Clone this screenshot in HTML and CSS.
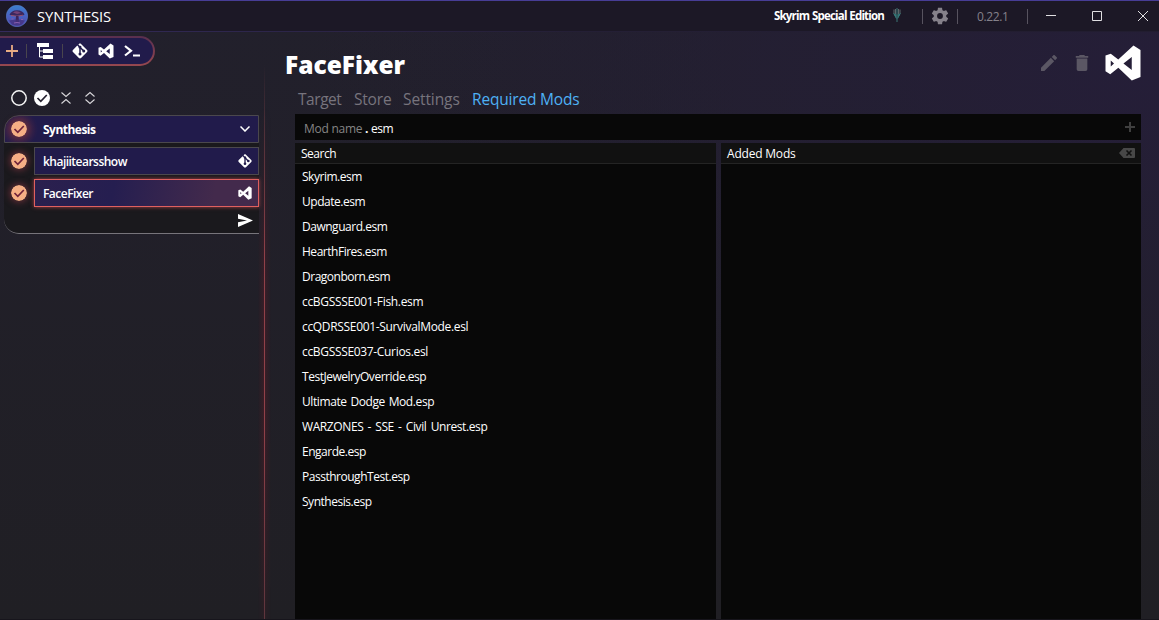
FILE: index.html
```html
<!DOCTYPE html>
<html lang="en">
<head>
<meta charset="utf-8">
<title>Synthesis</title>
<link rel="stylesheet" href="styles.css">
</head>
<body>
<svg class="defs" width="0" height="0">
  <symbol id="git" viewBox="0 0 24 24"><path d="M2.6,10.59L8.38,4.8L10.07,6.5C9.83,7.35 10.22,8.28 11,8.73V14.27C10.4,14.61 10,15.26 10,16A2,2 0 0,0 12,18A2,2 0 0,0 14,16C14,15.26 13.6,14.61 13,14.27V9.41L15.07,11.5C15,11.65 15,11.82 15,12A2,2 0 0,0 17,14A2,2 0 0,0 19,12A2,2 0 0,0 17,10C16.82,10 16.65,10 16.5,10.07L13.93,7.5C14.19,6.57 13.71,5.55 12.78,5.16C12.35,5 11.9,4.96 11.5,5.07L9.8,3.38L10.59,2.6C11.37,1.81 12.63,1.81 13.41,2.6L21.4,10.59C22.19,11.37 22.19,12.63 21.4,13.41L13.41,21.4C12.63,22.19 11.37,22.19 10.59,21.4L2.6,13.41C1.81,12.63 1.81,11.37 2.6,10.59Z"/></symbol>
  <symbol id="vs" viewBox="0 0 24 24"><path d="M17,8.5L12.25,12.32L17,16V8.5M4.7,18.4L2,16.7V7.7L5,6.7L9.3,10.03L18,2L22,4.5V20L17,22L9.34,14.66L4.7,18.4M5,14L6.86,12.28L5,10.5V14Z"/></symbol>
  <symbol id="check" viewBox="0 0 16 16"><circle cx="8" cy="8" r="8"/><path class="tick" d="M3.500 8l3.300 3.300 6-6.300"/></symbol>
</svg>
<div class="window">
  <header class="titlebar">
    <svg class="logo" viewBox="0 0 22 22">
      <defs><linearGradient id="sky" x1="0" y1="0" x2="0" y2="1"><stop offset="0" stop-color="#3a80cc"/><stop offset=".5" stop-color="#4a62c4"/><stop offset="1" stop-color="#5146a8"/></linearGradient></defs>
      <circle cx="11" cy="11" r="10.700" fill="url(#sky)" stroke="#5a7cc8" stroke-width=".6"/>
      <path d="M3.500 9.500C5 7 7 5.200 11 5.200c4 0 6.500 1.800 7.500 4.300-1.500 1-4 1.600-7.500 1.600s-6-.6-7.500-1.600z" fill="#3b275f"/>
      <path d="M7 7.500q4-2.500 8 .5l-4 1z" fill="#754277"/>
      <path d="M5 10.500q6 1.500 12-.3" stroke="#955272" fill="none"/>
      <path d="M10 11h2.500l.5 6H9.500z" fill="#3b255b"/>
      <path d="M3 15.500q8-2 16 0l-3 4q-5 2-10 0z" fill="#44307c" opacity=".75"/>
      <path d="M5.500 14h2M15 14.500h2M8 18q3-1 6 0" stroke="#8a5fae" fill="none"/>
    </svg>
    <span class="app-name">SYNTHESIS</span>
    <span class="game">Skyrim Special Edition</span>
    <svg class="game-icon" viewBox="0 0 10 14"><path d="M5 0v14" stroke="#31565b" stroke-width="1.500"/><path d="M2 1.500v4l2 4M8 1.500v4l-2 4M3.500 1v5M6.500 1v5" stroke="#5c686b" fill="none"/><path d="M1 5l3.500 1.500v5zM9 5L5.500 6.500v5z" fill="#347777"/></svg>
    <i class="sep"></i>
    <svg class="cog" viewBox="0 0 24 24"><path d="M12,15.5A3.5,3.5 0 0,1 8.5,12A3.5,3.5 0 0,1 12,8.5A3.5,3.5 0 0,1 15.5,12A3.5,3.5 0 0,1 12,15.5M19.43,12.97C19.47,12.65 19.5,12.33 19.5,12C19.5,11.67 19.47,11.34 19.43,11L21.54,9.37C21.73,9.22 21.78,8.95 21.66,8.73L19.66,5.27C19.54,5.05 19.27,4.96 19.05,5.05L16.56,6.05C16.04,5.66 15.5,5.32 14.87,5.07L14.5,2.42C14.46,2.18 14.25,2 14,2H10C9.75,2 9.54,2.18 9.5,2.42L9.13,5.07C8.5,5.32 7.96,5.66 7.44,6.05L4.95,5.05C4.73,4.96 4.46,5.05 4.34,5.27L2.34,8.73C2.21,8.95 2.27,9.22 2.46,9.37L4.57,11C4.53,11.34 4.5,11.67 4.5,12C4.5,12.33 4.53,12.65 4.57,12.97L2.46,14.63C2.27,14.78 2.21,15.05 2.34,15.27L4.34,18.73C4.46,18.95 4.73,19.03 4.95,18.95L7.44,17.94C7.96,18.34 8.5,18.68 9.13,18.93L9.5,21.58C9.54,21.82 9.75,22 10,22H14C14.25,22 14.46,21.82 14.5,21.58L14.87,18.93C15.5,18.67 16.04,18.34 16.56,17.94L19.05,18.95C19.27,19.03 19.54,18.95 19.66,18.73L21.66,15.27C21.78,15.05 21.73,14.78 21.54,14.63L19.43,12.97Z"/></svg>
    <i class="sep"></i>
    <span class="version">0.22.1</span>
    <i class="sep"></i>
    <svg class="win-buttons" viewBox="0 0 104 12"><path d="M0 5.500h10M46.500 1.500h9v9h-9zM92 1l10 10M102 1L92 11"/></svg>
  </header>
  <div class="body">
    <aside class="sidebar">
      <nav class="toolbar">
        <svg class="add" viewBox="0 0 12 12"><path d="M6 0v12M0 6h12"/></svg>
        <i class="bar"></i>
        <svg class="tree" viewBox="0 0 16 16"><path d="M0 0h12v4H0zM6 6h10v4H6zM6 12h10v4H6z"/><path class="link" d="M2.500 3v11H6M2.500 8H6"/></svg>
        <i class="bar"></i>
        <svg class="tool"><use href="#git"/></svg>
        <svg class="tool"><use href="#vs"/></svg>
        <svg class="term" viewBox="0 0 16 12"><path d="M1 1l6 4.800L1 10.500M9 10.500h7"/></svg>
      </nav>
      <div class="filters">
        <svg viewBox="0 0 16 16"><circle class="ring" cx="8" cy="8" r="7.200"/></svg>
        <svg class="all"><use href="#check"/></svg>
        <svg class="thin" viewBox="0 0 16 16"><path d="M3.500 2.500L8 6.500l4.500-4M3.500 13.500L8 9.500l4.500 4"/></svg>
        <svg class="thin" viewBox="0 0 16 16"><path d="M3.500 6.500L8 2.500l4.500 4M3.500 9.500L8 13.500l4.500-4"/></svg>
      </div>
      <section class="group">
        <div class="group-head">
          <svg class="on"><use href="#check"/></svg>
          <span class="label bold">Synthesis</span>
          <svg class="chev" viewBox="0 0 10 6"><path d="M.5.5L5 5 9.500.5"/></svg>
        </div>
        <div class="entry">
          <svg class="on"><use href="#check"/></svg>
          <div class="patcher"><span class="label">khajiitearsshow</span><svg class="kind"><use href="#git"/></svg></div>
        </div>
        <div class="entry">
          <svg class="on"><use href="#check"/></svg>
          <div class="patcher selected"><span class="label">FaceFixer</span><svg class="kind"><use href="#vs"/></svg></div>
        </div>
        <div class="run"><svg viewBox="0 0 15 13"><path d="M0 0l15 6.500L0 13V8.200l9-1.700-9-1.700z"/></svg></div>
      </section>
    </aside>
    <main class="content">
      <div class="heading">
        <h1>FaceFixer</h1>
        <svg class="pencil" viewBox="0 0 18 18"><path d="M0 14.250V18h3.750L14.810 6.940l-3.750-3.750L0 14.250M17.710 4.040c.390-.390.390-1.020 0-1.410l-2.340-2.340c-.390-.390-1.020-.390-1.410 0l-1.830 1.830 3.750 3.750 1.830-1.830z"/></svg>
        <svg class="trash" viewBox="0 0 14 18"><path d="M1 16a2 2 0 0 0 2 2h8a2 2 0 0 0 2-2V4H1v12M14 1h-3.500l-1-1h-5l-1 1H0v2h14V1z"/></svg>
        <svg class="big-vs"><use href="#vs"/></svg>
      </div>
      <nav class="tabs"><span class="t1">Target</span><span class="t2">Store</span><span class="t3">Settings</span><span class="t4">Required Mods</span></nav>
      <div class="mod-field"><span class="hint">Mod name</span><b>.</b><span class="ext">esm</span><svg class="plus" viewBox="0 0 10 10"><path d="M5 0v10M0 5h10"/></svg></div>
      <div class="panes">
        <section class="pane">
          <div class="pane-head search">Search</div>
          <ul class="mods">
            <li>Skyrim.esm</li><li>Update.esm</li><li>Dawnguard.esm</li><li>HearthFires.esm</li><li>Dragonborn.esm</li><li class="caps">ccBGSSSE001-Fish.esm</li><li class="caps">ccQDRSSE001-SurvivalMode.esl</li><li class="caps">ccBGSSSE037-Curios.esl</li><li>TestJewelryOverride.esp</li><li class="dodge">Ultimate Dodge Mod.esp</li><li class="spaced">WARZONES - SSE - Civil Unrest.esp</li><li>Engarde.esp</li><li>PassthroughTest.esp</li><li>Synthesis.esp</li>
          </ul>
        </section>
        <section class="pane">
          <div class="pane-head"><span>Added Mods</span><svg class="clear" viewBox="0 0 16 10"><path d="M4.500 0H15q1 0 1 1v8q0 1-1 1H4.500L0 5z"/><path class="cross" d="M7.500 2.500l5 5M12.500 2.500l-5 5"/></svg></div>
        </section>
      </div>
    </main>
  </div>
</div>
</body>
</html>
```

FILE: styles.css
```css
* { box-sizing: border-box; }
body { margin: 0; background: #1f1e24; color: #fff; font: 12px/16px "Open Sans", "Noto Sans", sans-serif; overflow: hidden; }
svg { display: block; flex: none; fill: currentColor; }
.defs { position: absolute; }
.window { width: 1159px; height: 620px; display: flex; flex-direction: column; background: radial-gradient(ellipse 850px 430px at 100% 12%, #251e38, transparent), linear-gradient(#22202c, #201f24); border-bottom: 1px solid #17151c; }
.titlebar { height: 32px; flex: none; display: flex; align-items: center; padding-left: 6px; background: linear-gradient(#473d96, #473d96) top / 100% 1px no-repeat, linear-gradient(90deg, #342b5c, #241f35 50%, #221d30) bottom / 100% 1px no-repeat, #1c1826; }
.logo { width: 22px; height: 22px; }
.app-name { font-size: 14.8px; line-height: 20px; margin: -1px 0 0 9px; width: 75px; letter-spacing: -0.12px; white-space: nowrap; }
.game { font-size: 11.5px; font-weight: 700; margin-left: 662px; width: 112px; letter-spacing: -0.8px; word-spacing: 0.5px; white-space: nowrap; }
.game-icon { width: 10px; height: 14px; margin: -2px 0 0 6px; }
.sep { width: 1px; height: 15px; background: #57535f; }
.game-icon + .sep { margin-left: 20px; }
.cog { width: 20px; height: 20px; margin: 0 7px; color: #85818a; }
.version { width: 32px; margin: 1px 18px 0 19px; color: #85818a; letter-spacing: -0.4px; }
.win-buttons { width: 104px; height: 12px; margin-left: 18px; fill: none; stroke: #e0dfe2; }
.body { flex: 1; display: flex; min-height: 0; }
.sidebar { width: 265px; flex: none; padding-top: 4px; position: relative; }
.sidebar::after { content: ""; position: absolute; right: 0; top: 32px; bottom: 0; width: 1px; background: linear-gradient(transparent, #4f3039 12%, #914149 35%, #914149 65%, #5e353d); }
.sidebar::before { content: ""; position: absolute; right: -6px; top: 32px; bottom: 0; width: 13px; background: linear-gradient(90deg, transparent, #5c1b2675, transparent); -webkit-mask-image: linear-gradient(transparent 8%, #000 40%, #000 65%, #0006); mask-image: linear-gradient(transparent 8%, #000 40%, #000 65%, #0006); }
.toolbar { width: 155px; height: 30px; display: flex; align-items: center; padding: 0 0 1px 6px; border: 2px solid transparent; border-left: 0; border-radius: 0 15px 15px 0; background: linear-gradient(#211b4b, #211b4b) padding-box, linear-gradient(#582f4f, #96484f) border-box; }
.add { width: 12px; height: 12px; stroke: #e9ac83; stroke-width: 1.8; }
.bar { width: 1px; height: 14px; background: #49454d; }
.add + .bar { margin: 0 10px 0 8px; }
.tree { width: 16px; height: 16px; }
.tree .link { fill: none; stroke: #fff; }
.tree + .bar { margin: 0 8px 0 9px; }
.tool { width: 18px; height: 18px; margin-right: 8px; }
.term { width: 16px; height: 12px; margin-left: 1px; fill: none; stroke: #fff; stroke-width: 2.2; }
.filters { display: flex; gap: 8px; margin: 24px 0 0 11px; }
.filters svg { width: 16px; height: 16px; }
.filters .all { margin-left: -1px; }
.ring, .thin { fill: none; stroke: #f5f5f5; stroke-width: 1.5; }
.thin { stroke: #d8d7da; stroke-width: 1.1; }
.all { color: #fff; }
.on { --tick: #70233a; width: 16px; height: 16px; color: #f6af85; border-radius: 50%; box-shadow: 0 0 7px 1px #70303b; }
.tick { fill: none; stroke: var(--tick, #24202e); stroke-width: 1.7; }
.group { width: 255px; height: 119px; margin: 9px 0 0 4px; background: #1a191d; border-bottom: 1px solid #77757b; border-radius: 15px 0 0 15px; }
.group-head { height: 28px; display: flex; align-items: center; padding: 0 8px 0 6px; background: radial-gradient(circle at 14px 13px, #582a43, transparent 19px), #211b4b; border: 1px solid #4b484d; border-radius: 15px 0 0 0; }
.label { font-size: 12px; font-weight: 600; letter-spacing: -0.52px; white-space: nowrap; padding-top: 1px; }
.group-head .label { margin-left: 16px; flex: 1; }
.group-head .bold { font-weight: 700; letter-spacing: -0.52px; }
.chev { width: 10px; height: 6px; fill: none; stroke: #fff; stroke-width: 1.5; }
.entry { display: flex; align-items: center; padding-left: 7px; margin-top: 4px; }
.patcher { flex: 1; height: 28px; margin-left: 7px; display: flex; align-items: center; justify-content: space-between; padding: 0 5px 0 8px; background: #211b4b; border: 1px solid #4b484d; }
.selected { border-color: #e0605f; background: linear-gradient(100deg, #2b204e, #251e50 35%, #432a4c 80%); box-shadow: 0 0 4px #a8424a; }
.kind { width: 16px; height: 16px; }
.run { height: 26px; display: flex; justify-content: flex-end; padding: 7px 6px 0 0; }
.run svg { width: 15px; height: 13px; }
.content { flex: 1; display: flex; flex-direction: column; padding: 0 18px 0 30px; min-width: 0; }
.heading { height: 57px; flex: none; display: flex; align-items: center; padding-top: 4px; margin-left: -10px; }
h1 { margin: 4px 0 0; flex: 1; font: 800 24.5px/30px "Open Sans", sans-serif; letter-spacing: 0; }
.pencil { width: 16px; height: 16px; color: #5b5764; margin-right: 18px; }
.trash { width: 14px; height: 16px; color: #5b5764; margin-right: 13px; }
.big-vs { width: 42px; height: 42px; margin: 1px -3px 0 0; }
.tabs { height: 25px; flex: none; display: flex; padding-left: 3px; font-size: 15.5px; line-height: 20px; color: #77747d; letter-spacing: -0.1px; white-space: nowrap; }
.t1 { width: 56px; letter-spacing: -0.45px; } .t2 { width: 49px; letter-spacing: -0.2px; } .t3 { width: 69px; } .t4 { color: #4eb1f5; letter-spacing: -0.18px; }
.mod-field { height: 26px; flex: none; display: flex; align-items: center; padding: 3px 6px 0 9px; background: #080808; font-size: 12px; letter-spacing: -0.25px; white-space: nowrap; }
.hint { width: 61px; color: #858585; }
.mod-field b { width: 6px; }
.ext { flex: 1; letter-spacing: -0.5px; }
.plus { width: 10px; height: 10px; margin-top: -3px; stroke: #3f3f3f; stroke-width: 2; }
.panes { flex: 1; display: grid; grid-template-columns: 421px 420px; gap: 5px; margin-top: 3px; min-height: 0; }
.pane { background: #080808; }
.pane-head { height: 21px; display: flex; align-items: center; justify-content: space-between; padding: 1px 6px 0; font-size: 12px; letter-spacing: -0.2px; background: #111; border-bottom: 1px solid #242424; }
.search { letter-spacing: -0.5px; }
.clear { width: 16px; height: 10px; color: #484848; margin-top: -1px; }
.cross { stroke: #111; stroke-width: 1.6; }
.mods { list-style: none; margin: 0; padding: 0 7px; font-size: 12px; line-height: 25px; letter-spacing: -0.48px; }
.caps { letter-spacing: -0.33px; }
.dodge { letter-spacing: -0.4px; word-spacing: 1px; }
.spaced { letter-spacing: -0.4px; word-spacing: 1.5px; }
```
